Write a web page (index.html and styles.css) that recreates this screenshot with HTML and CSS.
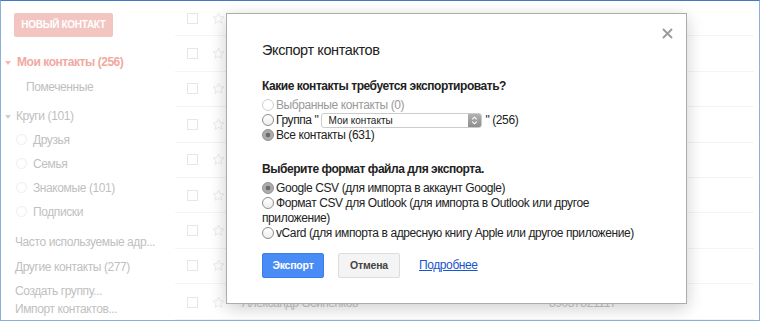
FILE: index.html
```html
<!DOCTYPE html>
<html lang="ru">
<head>
<meta charset="utf-8">
<title>Экспорт контактов</title>
<link rel="stylesheet" href="styles.css">
</head>
<body>
<div class="frame">
  <div class="app">
    <aside class="sidebar">
      <div class="new-btn">НОВЫЙ КОНТАКТ</div>
      <div class="nav nav-mine"><span class="tri tri-red"></span>Мои контакты (256)</div>
      <div class="nav nav-starred">Помеченные</div>
      <div class="nav nav-circles"><span class="tri"></span>Круги (101)</div>
      <div class="nav nav-circle"><span class="circ"></span>Друзья</div>
      <div class="nav nav-circle"><span class="circ"></span>Семья</div>
      <div class="nav nav-circle"><span class="circ"></span>Знакомые (101)</div>
      <div class="nav nav-circle"><span class="circ"></span>Подписки</div>
      <div class="nav nav-plain nav-freq">Часто используемые адр...</div>
      <div class="nav nav-plain nav-other">Другие контакты (277)</div>
      <div class="nav nav-plain nav-small nav-create">Создать группу...</div>
      <div class="nav nav-plain nav-small">Импорт контактов...</div>
    </aside>
    <main class="list">
      <div class="row"><span class="chk"></span><svg class="star" viewBox="0 0 14 14"><path d="M7 1.2l1.7 3.8 4.1.4-3.1 2.7.9 4-3.6-2.1-3.6 2.1.9-4L1.2 5.4l4.1-.4z"/></svg></div>
      <div class="row"><span class="chk"></span><svg class="star" viewBox="0 0 14 14"><path d="M7 1.2l1.7 3.8 4.1.4-3.1 2.7.9 4-3.6-2.1-3.6 2.1.9-4L1.2 5.4l4.1-.4z"/></svg></div>
      <div class="row"><span class="chk"></span><svg class="star" viewBox="0 0 14 14"><path d="M7 1.2l1.7 3.8 4.1.4-3.1 2.7.9 4-3.6-2.1-3.6 2.1.9-4L1.2 5.4l4.1-.4z"/></svg></div>
      <div class="row"><span class="chk"></span><svg class="star" viewBox="0 0 14 14"><path d="M7 1.2l1.7 3.8 4.1.4-3.1 2.7.9 4-3.6-2.1-3.6 2.1.9-4L1.2 5.4l4.1-.4z"/></svg></div>
      <div class="row"><span class="chk"></span><svg class="star" viewBox="0 0 14 14"><path d="M7 1.2l1.7 3.8 4.1.4-3.1 2.7.9 4-3.6-2.1-3.6 2.1.9-4L1.2 5.4l4.1-.4z"/></svg></div>
      <div class="row"><span class="chk"></span><svg class="star" viewBox="0 0 14 14"><path d="M7 1.2l1.7 3.8 4.1.4-3.1 2.7.9 4-3.6-2.1-3.6 2.1.9-4L1.2 5.4l4.1-.4z"/></svg></div>
      <div class="row"><span class="chk"></span><svg class="star" viewBox="0 0 14 14"><path d="M7 1.2l1.7 3.8 4.1.4-3.1 2.7.9 4-3.6-2.1-3.6 2.1.9-4L1.2 5.4l4.1-.4z"/></svg></div>
      <div class="row"><span class="chk"></span><svg class="star" viewBox="0 0 14 14"><path d="M7 1.2l1.7 3.8 4.1.4-3.1 2.7.9 4-3.6-2.1-3.6 2.1.9-4L1.2 5.4l4.1-.4z"/></svg></div>
      <div class="row row-last"><span class="chk"></span><svg class="star" viewBox="0 0 14 14"><path d="M7 1.2l1.7 3.8 4.1.4-3.1 2.7.9 4-3.6-2.1-3.6 2.1.9-4L1.2 5.4l4.1-.4z"/></svg><span class="name">Александр Осипенков</span><span class="phone">89037821117</span></div>
    </main>
  </div>

  <div class="dialog">
    <svg class="close" viewBox="0 0 11 11"><path d="M1 1L10 10M10 1L1 10"/></svg>
    <h2 class="title">Экспорт контактов</h2>
    <div class="q">Какие контакты требуется экспортировать?</div>
    <div class="opt opt-disabled"><input type="radio" name="who" disabled>Выбранные контакты (0)</div>
    <div class="opt"><input type="radio" name="who">Группа "<span class="sel"><span class="sel-text">Мои контакты</span><span class="sel-arrow"><svg viewBox="0 0 7 9"><path d="M1.2 3.4L3.5 1.2 5.8 3.4M1.2 5.6L3.5 7.8 5.8 5.6"/></svg></span></span>" (256)</div>
    <div class="opt"><input type="radio" name="who" checked>Все контакты (631)</div>
    <div class="q q2">Выберите формат файла для экспорта.</div>
    <div class="opt"><input type="radio" name="fmt" checked>Google CSV (для импорта в аккаунт Google)</div>
    <div class="opt"><input type="radio" name="fmt">Формат CSV для Outlook (для импорта в Outlook или другое приложение)</div>
    <div class="opt"><input type="radio" name="fmt">vCard (для импорта в адресную книгу Apple или другое приложение)</div>
    <div class="actions">
      <button class="btn btn-primary">Экспорт</button>
      <button class="btn btn-cancel">Отмена</button>
      <a class="more" href="#">Подробнее</a>
    </div>
  </div>
</div>
</body>
</html>
```

FILE: styles.css
```css
* { box-sizing: border-box; }
html, body { margin: 0; padding: 0; background: #fff; }
body { font-family: "Liberation Sans", Arial, sans-serif; font-size: 12px; letter-spacing: -0.4px; color: #222; }

.frame {
  position: relative;
  width: 760px;
  height: 321px;
  border: 1px solid #8bb0dc;
  border-top-color: #3f78c4;
  overflow: hidden;
  background: #fff;
}

.app { display: flex; height: 100%; }

/* sidebar (faded behind the modal) */
.sidebar { width: 174px; flex: none; color: #bfbfbf; }
.new-btn {
  margin: 12px 0 0 13px;
  width: 99px; height: 24px; line-height: 24px;
  background: #f3c5c0; color: #fff;
  font-size: 10px; font-weight: bold; letter-spacing: -0.3px; text-align: center;
  border-radius: 2px;
}
.nav { height: 24px; line-height: 24px; white-space: nowrap; }
.nav-mine { margin-top: 13px; padding-left: 4px; color: #f2a8a1; font-weight: bold; letter-spacing: -0.45px; }
.nav-starred { margin-top: 1px; padding-left: 25px; }
.nav-circles { margin-top: 5px; padding-left: 4px; }
.nav-circle { padding-left: 15px; }
.nav-plain { padding-left: 14px; }
.nav-freq { margin-top: 6px; }
.nav-other { margin-top: 1px; }
.nav-small { height: 18px; line-height: 18px; }
.nav-create { margin-top: 3px; }

.tri {
  display: inline-block; vertical-align: middle;
  width: 0; height: 0;
  border-left: 3px solid transparent; border-right: 3px solid transparent;
  border-top: 4px solid #cfcfcf;
  margin-right: 5px;
}
.tri-red { border-top-color: #f5b8b2; margin-right: 6px; }
.circ {
  display: inline-block; vertical-align: middle;
  width: 11px; height: 11px; border-radius: 50%;
  border: 1px solid #eeeeee; margin: -2px 6px 0 0;
}

/* contact list */
.list { width: 579px; flex: none; }
.row {
  height: 35.4px;
  display: flex; align-items: center;
  border-bottom: 1px solid #f4f4f4;
  color: #c9c9c9;
}
.row-last { padding-top: 3px; }
.chk { width: 11px; height: 11px; border: 1px solid #e6e6e6; margin-left: 12px; flex: none; }
.star { width: 13px; height: 13px; margin-left: 14px; flex: none; fill: none; stroke: #e9e9e9; stroke-width: 1; }
.name { margin-left: 17px; width: 307px; flex: none; white-space: nowrap; }
.phone { white-space: nowrap; }

/* modal dialog */
.dialog {
  position: absolute;
  left: 225px; top: 12px;
  width: 461px;
  padding: 27px 35px 25px;
  background: #fff;
  border: 1px solid #acacac;
  box-shadow: 0 4px 16px rgba(0,0,0,.2);
}
.close {
  position: absolute; top: 14px; right: 13px;
  width: 11px; height: 11px;
  stroke: #9b9b9b; stroke-width: 1.9; fill: none;
}
.title { margin: 0; font-size: 14.5px; font-weight: normal; letter-spacing: -0.4px; line-height: 19px; color: #222; }
.q { margin-top: 17.5px; margin-bottom: 4px; font-weight: bold; letter-spacing: -0.45px; line-height: 16px; color: #222; }
.q2 { margin-top: 18px; }
.opt { line-height: 15px; color: #222; }
.opt-disabled { color: #9a9a9a; }

input[type=radio] {
  -webkit-appearance: none; appearance: none;
  width: 12px; height: 12px; margin: 0 2px 0 0;
  vertical-align: -2px;
  border: 1px solid #8d8d8d; border-radius: 50%;
  background: linear-gradient(#ffffff, #ededed);
}
input[type=radio]:disabled { border-color: #cfcfcf; background: #fff; }
input[type=radio]:checked {
  border-color: #8f8f8f;
  background: radial-gradient(circle, #6a6a6a 0, #6a6a6a 2px, #a9a9a9 2.6px, #b4b4b4 100%);
}

.sel {
  display: inline-flex; vertical-align: top;
  width: 161px; height: 15px;
  margin: 0 3px;
  border: 1px solid #cbcbcb; border-radius: 3px;
  background: #fff; overflow: hidden;
}
.sel-text { flex: 1; padding-left: 6px; font-size: 10px; letter-spacing: 0; line-height: 13px; color: #222; }
.sel-arrow {
  width: 13px; flex: none;
  display: flex; align-items: center; justify-content: center;
  background: linear-gradient(#b2b2b2, #8c8c8c);
}
.sel-arrow svg { width: 7px; height: 9px; fill: none; stroke: #fff; stroke-width: 1.1; }

.actions { display: flex; align-items: center; margin-top: 12px; }
.btn {
  height: 25px; min-width: 62px; padding: 0 8px;
  font-family: inherit; font-size: 10.5px; font-weight: bold; letter-spacing: -0.2px;
  border-radius: 2px; border: 1px solid #dcdcdc;
}
.btn-primary { background: #4a8cf6; border-color: #3b7ee9; color: #fff; }
.btn-cancel { background: #f4f4f4; color: #444; margin-left: 14px; }
.more { margin-left: 19px; color: #1a55d0; text-decoration: underline; font-size: 12px; }
```
